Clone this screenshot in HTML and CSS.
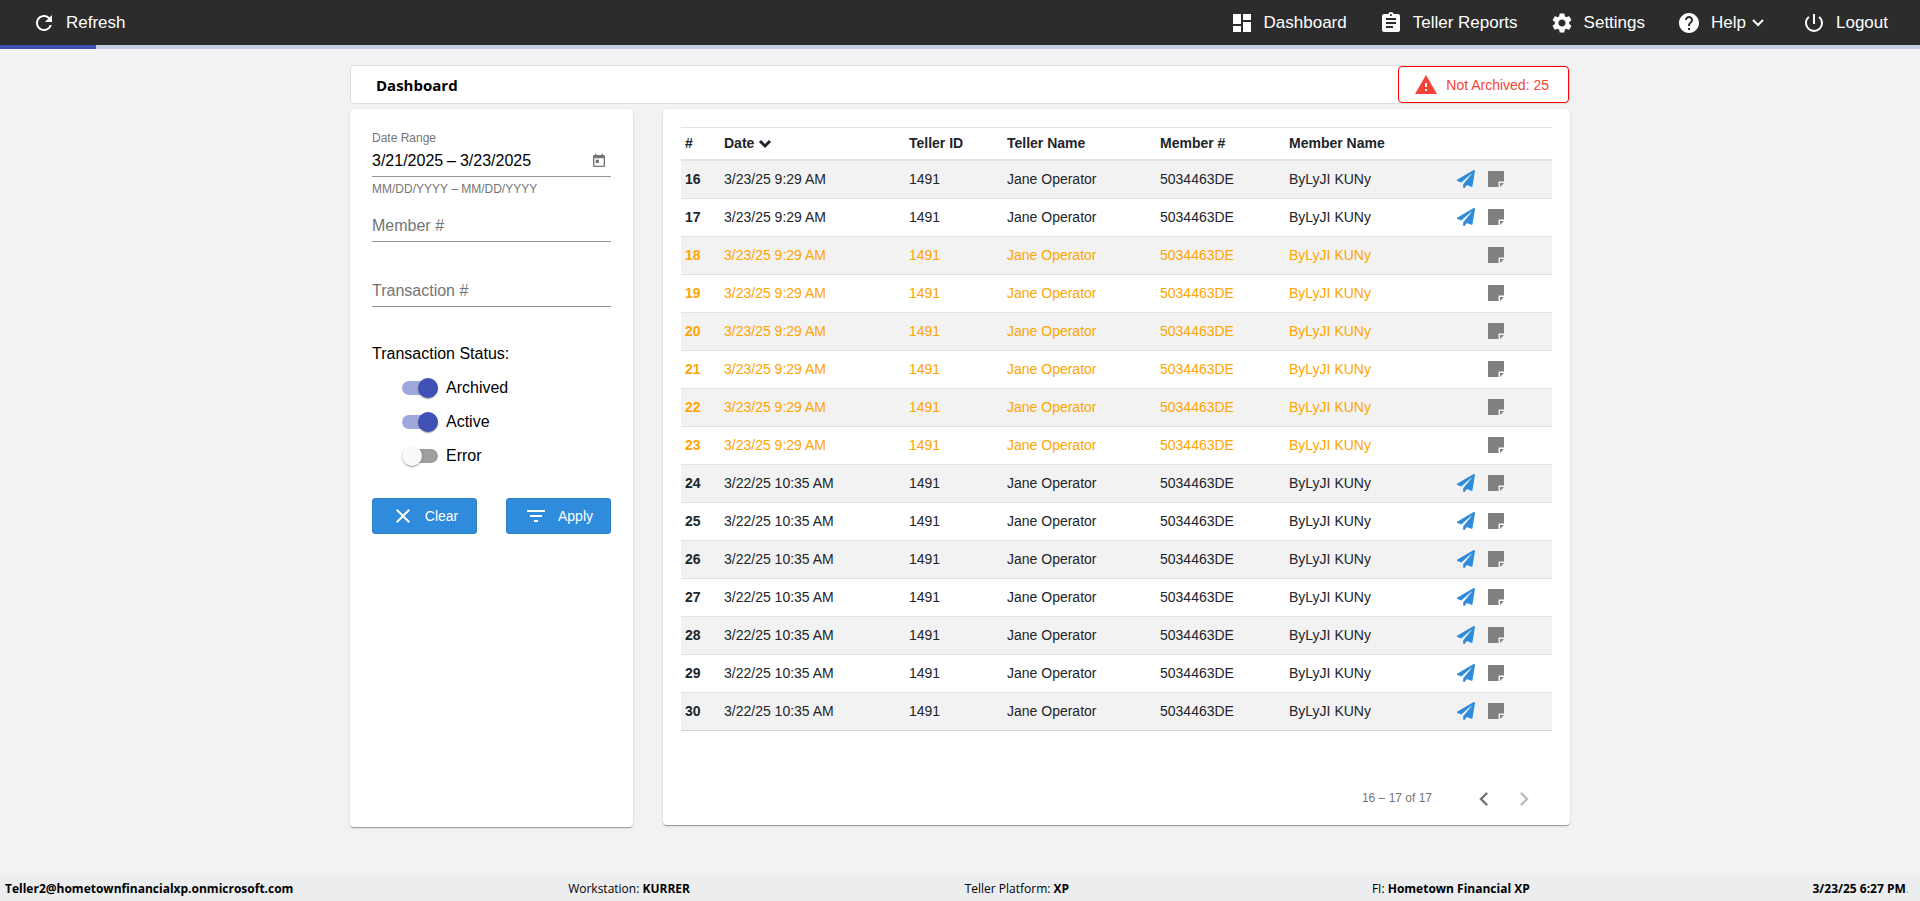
FILE: index.html
```html
<!DOCTYPE html>
<html lang="en">
<head>
<meta charset="utf-8">
<title>Dashboard</title>
<link rel="stylesheet" href="styles.css">
</head>
<body>
<svg class="defs" aria-hidden="true">
  <symbol id="plane" viewBox="0 0 512 512"><path d="M476 3.200L12.500 270.600c-18.100 10.400-15.800 35.600 2.200 43.200L121 358.400l287.300-253.200c5.500-4.900 13.300 2.600 8.600 8.300L176 407v80.500c0 23.600 28.500 32.900 42.500 15.800L282 426l124.600 52.200c14.200 6 30.400-2.900 33-18.200l72-432C515 7.800 493.300-6.800 476 3.200z"/></symbol>
  <symbol id="note" viewBox="0 0 16 16"><path d="M0 0h16v10.500h-5.500V16H0zM12 12h4l-4 4z"/></symbol>
</svg>
<header class="topbar">
  <button class="nav-item" type="button"><svg class="icon" viewBox="0 0 24 24"><path d="M17.650 6.350A7.958 7.958 0 0 0 12 4c-4.420 0-7.990 3.580-7.990 8s3.570 8 7.990 8c3.730 0 6.840-2.550 7.730-6h-2.080A5.990 5.990 0 0 1 12 18c-3.310 0-6-2.690-6-6s2.690-6 6-6c1.660 0 3.140.690 4.220 1.780L13 11h7V4l-2.350 2.350z"/></svg>Refresh</button>
  <nav class="nav">
    <a class="nav-item" href="#"><svg class="icon" viewBox="0 0 24 24"><path d="M3 13h8V3H3v10zm0 8h8v-6H3v6zm10 0h8V11h-8v10zm0-18v6h8V3h-8z"/></svg>Dashboard</a>
    <a class="nav-item" href="#"><svg class="icon" viewBox="0 0 24 24"><path d="M19 3h-4.180C14.400 1.840 13.300 1 12 1s-2.400.840-2.820 2H5c-1.100 0-2 .900-2 2v14c0 1.100.900 2 2 2h14c1.100 0 2-.900 2-2V5c0-1.100-.900-2-2-2zm-7 0c.550 0 1 .450 1 1s-.450 1-1 1-1-.450-1-1 .450-1 1-1zm2 14H7v-2h7v2zm3-4H7v-2h10v2zm0-4H7V7h10v2z"/></svg>Teller Reports</a>
    <a class="nav-item" href="#"><svg class="icon" viewBox="0 0 24 24"><path d="M19.140 12.940c.040-.300.060-.610.060-.940 0-.320-.020-.640-.070-.940l2.030-1.580c.180-.140.230-.410.120-.610l-1.920-3.320c-.120-.220-.370-.290-.590-.220l-2.390.960c-.500-.380-1.030-.700-1.620-.940l-.360-2.540c-.040-.240-.240-.410-.480-.410h-3.840c-.240 0-.430.170-.470.410l-.360 2.540c-.590.240-1.130.570-1.620.940l-2.390-.960c-.220-.080-.470 0-.590.220L2.740 8.870c-.120.210-.080.470.120.610l2.030 1.580c-.050.300-.090.630-.090.940s.020.640.070.940l-2.030 1.580c-.180.140-.230.410-.120.610l1.920 3.320c.120.220.370.290.590.220l2.390-.960c.500.380 1.030.700 1.620.940l.360 2.540c.050.240.240.410.480.410h3.840c.240 0 .440-.170.470-.410l.360-2.540c.590-.240 1.130-.560 1.620-.940l2.390.960c.220.080.470 0 .590-.220l1.920-3.320c.120-.220.070-.470-.120-.610l-2.010-1.580zM12 15.600c-1.980 0-3.600-1.620-3.600-3.600s1.620-3.600 3.600-3.600 3.600 1.620 3.600 3.600-1.620 3.600-3.600 3.600z"/></svg>Settings</a>
    <a class="nav-item" href="#"><svg class="icon" viewBox="0 0 24 24"><path d="M12 2C6.480 2 2 6.480 2 12s4.480 10 10 10 10-4.480 10-10S17.520 2 12 2zm1 17h-2v-2h2v2zm2.070-7.750l-.900.920C13.450 12.900 13 13.500 13 15h-2v-.500c0-1.100.450-2.100 1.170-2.830l1.240-1.260c.370-.360.590-.860.590-1.410 0-1.100-.900-2-2-2s-2 .900-2 2H8c0-2.210 1.790-4 4-4s4 1.790 4 4c0 .880-.360 1.680-.930 2.250z"/></svg>Help<svg class="caret" viewBox="0 0 14 14"><path d="M2 4l5 5 5-5"/></svg></a>
    <a class="nav-item" href="#"><svg class="icon" viewBox="0 0 24 24"><path d="M13 3h-2v10h2V3zm4.830 2.170l-1.420 1.420A6.920 6.920 0 0 1 19 12c0 3.870-3.130 7-7 7A6.995 6.995 0 0 1 7.580 6.580L6.170 5.170A8.932 8.932 0 0 0 3 12a9 9 0 0 0 18 0c0-2.740-1.230-5.180-3.170-6.830z"/></svg>Logout</a>
  </nav>
</header>
<div class="loading" role="progressbar" aria-label="Loading"><div class="loading-bar"></div></div>

<main class="page">
  <div class="titlebar">
    <h1 class="title">Dashboard</h1>
    <button class="alert" type="button"><svg class="alert-icon" viewBox="0 0 24 24"><path d="M1 21h22L12 2 1 21zm12-3h-2v-2h2v2zm0-4h-2v-4h2v4z"/></svg>Not Archived: 25</button>
  </div>
  <div class="columns">
    <form class="card filters">
      <div class="field field-date">
        <label class="field-label" for="from">Date Range</label>
        <div class="range">
          <input class="date" id="from" type="text" value="3/21/2025"><span>–</span><input class="date" type="text" value="3/23/2025" aria-label="End date">
          <button class="calendar" type="button" aria-label="Open calendar"><svg viewBox="0 0 24 24"><path d="M19 3h-1V1h-2v2H8V1H6v2H5c-1.110 0-1.990.900-1.990 2L3 19c0 1.100.890 2 2 2h14c1.100 0 2-.900 2-2V5c0-1.100-.900-2-2-2zm0 16H5V8h14v11zM7 10h5v5H7z"/></svg></button>
        </div>
      </div>
      <div class="hint">MM/DD/YYYY – MM/DD/YYYY</div>
      <input class="field field-text" type="text" placeholder="Member #" aria-label="Member #">
      <input class="field field-text" type="text" placeholder="Transaction #" aria-label="Transaction #">
      <fieldset class="status">
        <legend class="legend">Transaction Status:</legend>
        <label class="toggle"><input class="switch" type="checkbox" checked>Archived</label>
        <label class="toggle"><input class="switch" type="checkbox" checked>Active</label>
        <label class="toggle"><input class="switch" type="checkbox">Error</label>
      </fieldset>
      <div class="actions">
        <button class="btn" type="reset"><svg class="btn-icon" viewBox="0 0 24 24"><path d="M19 6.410L17.590 5 12 10.590 6.410 5 5 6.410 10.590 12 5 17.590 6.410 19 12 13.410 17.590 19 19 17.590 13.410 12z"/></svg>Clear</button>
        <button class="btn" type="button"><svg class="btn-icon" viewBox="0 0 24 24"><path d="M10 18h4v-2h-4v2zM3 6v2h18V6H3zm3 7h12v-2H6v2z"/></svg>Apply</button>
      </div>
    </form>

    <section class="card results">
      <table class="grid">
        <colgroup><col class="c-num"><col class="c-date"><col class="c-id"><col class="c-name"><col class="c-member"><col class="c-mname"><col class="c-icons"></colgroup>
        <thead><tr><th>#</th><th>Date <svg class="sort" viewBox="0 0 14 14"><path d="M2 4l5 5 5-5"/></svg></th><th>Teller ID</th><th>Teller Name</th><th>Member #</th><th>Member Name</th><th></th></tr></thead>
        <tbody>
          <tr><th>16</th><td>3/23/25 9:29 AM</td><td>1491</td><td>Jane Operator</td><td>5034463DE</td><td>ByLyJI KUNy</td><td><div class="row-icons"><svg class="plane"><use href="#plane"/></svg><svg class="note"><use href="#note"/></svg></div></td></tr>
          <tr><th>17</th><td>3/23/25 9:29 AM</td><td>1491</td><td>Jane Operator</td><td>5034463DE</td><td>ByLyJI KUNy</td><td><div class="row-icons"><svg class="plane"><use href="#plane"/></svg><svg class="note"><use href="#note"/></svg></div></td></tr>
          <tr class="pending"><th>18</th><td>3/23/25 9:29 AM</td><td>1491</td><td>Jane Operator</td><td>5034463DE</td><td>ByLyJI KUNy</td><td><div class="row-icons"><svg class="note"><use href="#note"/></svg></div></td></tr>
          <tr class="pending"><th>19</th><td>3/23/25 9:29 AM</td><td>1491</td><td>Jane Operator</td><td>5034463DE</td><td>ByLyJI KUNy</td><td><div class="row-icons"><svg class="note"><use href="#note"/></svg></div></td></tr>
          <tr class="pending"><th>20</th><td>3/23/25 9:29 AM</td><td>1491</td><td>Jane Operator</td><td>5034463DE</td><td>ByLyJI KUNy</td><td><div class="row-icons"><svg class="note"><use href="#note"/></svg></div></td></tr>
          <tr class="pending"><th>21</th><td>3/23/25 9:29 AM</td><td>1491</td><td>Jane Operator</td><td>5034463DE</td><td>ByLyJI KUNy</td><td><div class="row-icons"><svg class="note"><use href="#note"/></svg></div></td></tr>
          <tr class="pending"><th>22</th><td>3/23/25 9:29 AM</td><td>1491</td><td>Jane Operator</td><td>5034463DE</td><td>ByLyJI KUNy</td><td><div class="row-icons"><svg class="note"><use href="#note"/></svg></div></td></tr>
          <tr class="pending"><th>23</th><td>3/23/25 9:29 AM</td><td>1491</td><td>Jane Operator</td><td>5034463DE</td><td>ByLyJI KUNy</td><td><div class="row-icons"><svg class="note"><use href="#note"/></svg></div></td></tr>
          <tr><th>24</th><td>3/22/25 10:35 AM</td><td>1491</td><td>Jane Operator</td><td>5034463DE</td><td>ByLyJI KUNy</td><td><div class="row-icons"><svg class="plane"><use href="#plane"/></svg><svg class="note"><use href="#note"/></svg></div></td></tr>
          <tr><th>25</th><td>3/22/25 10:35 AM</td><td>1491</td><td>Jane Operator</td><td>5034463DE</td><td>ByLyJI KUNy</td><td><div class="row-icons"><svg class="plane"><use href="#plane"/></svg><svg class="note"><use href="#note"/></svg></div></td></tr>
          <tr><th>26</th><td>3/22/25 10:35 AM</td><td>1491</td><td>Jane Operator</td><td>5034463DE</td><td>ByLyJI KUNy</td><td><div class="row-icons"><svg class="plane"><use href="#plane"/></svg><svg class="note"><use href="#note"/></svg></div></td></tr>
          <tr><th>27</th><td>3/22/25 10:35 AM</td><td>1491</td><td>Jane Operator</td><td>5034463DE</td><td>ByLyJI KUNy</td><td><div class="row-icons"><svg class="plane"><use href="#plane"/></svg><svg class="note"><use href="#note"/></svg></div></td></tr>
          <tr><th>28</th><td>3/22/25 10:35 AM</td><td>1491</td><td>Jane Operator</td><td>5034463DE</td><td>ByLyJI KUNy</td><td><div class="row-icons"><svg class="plane"><use href="#plane"/></svg><svg class="note"><use href="#note"/></svg></div></td></tr>
          <tr><th>29</th><td>3/22/25 10:35 AM</td><td>1491</td><td>Jane Operator</td><td>5034463DE</td><td>ByLyJI KUNy</td><td><div class="row-icons"><svg class="plane"><use href="#plane"/></svg><svg class="note"><use href="#note"/></svg></div></td></tr>
          <tr><th>30</th><td>3/22/25 10:35 AM</td><td>1491</td><td>Jane Operator</td><td>5034463DE</td><td>ByLyJI KUNy</td><td><div class="row-icons"><svg class="plane"><use href="#plane"/></svg><svg class="note"><use href="#note"/></svg></div></td></tr>
        </tbody>
      </table>
      <div class="pager">
        <span class="pager-range">16 – 17 of 17</span>
        <button class="pager-btn" type="button" aria-label="Previous page"><svg viewBox="0 0 24 24"><path d="M15.410 7.410L14 6l-6 6 6 6 1.410-1.410L10.830 12z"/></svg></button>
        <button class="pager-btn" type="button" aria-label="Next page" disabled><svg viewBox="0 0 24 24"><path d="M10 6L8.590 7.410 13.170 12l-4.580 4.590L10 18l6-6z"/></svg></button>
      </div>
    </section>
  </div>
</main>

<footer class="footer">
  <b>Teller2@hometownfinancialxp.onmicrosoft.com</b>
  <span>Workstation: <b>KURRER</b></span>
  <span class="platform">Teller Platform: <b>XP</b></span>
  <span class="institution">FI: <b>Hometown Financial XP</b></span>
  <span><b>3/23/25 6:27 PM</b><span class="dot">.</span></span>
</footer>
</body>
</html>
```
FILE: styles.css
```css
* { box-sizing: border-box; }

body {
  margin: 0;
  min-height: 100vh;
  display: flex;
  flex-direction: column;
  background: #f2f2f2;
  color: #000;
  font-family: "Liberation Sans", Arial, sans-serif;
  font-size: 14px;
}

button, input { font: inherit; color: inherit; }
button { cursor: pointer; }
svg { display: block; fill: currentColor; flex: none; }
.defs { display: none; }

.topbar {
  display: flex;
  justify-content: space-between;
  align-items: center;
  height: 45px;
  padding: 0 32px;
  background: #2c2c2c;
  color: #fff;
  font-size: 17px;
}
.nav { display: flex; gap: 32px; }
.nav-item {
  display: flex;
  align-items: center;
  gap: 10px;
  padding: 0;
  border: 0;
  background: none;
  color: #fff;
  text-decoration: none;
}
.icon { width: 24px; height: 24px; }
.caret {
  width: 14px;
  height: 14px;
  margin: 0 5px 0 -5px;
  fill: none;
  stroke: currentColor;
  stroke-width: 2;
}

.loading { height: 4px; background: #c9cde7; }
.loading-bar { width: 5%; height: 100%; background: #3f51b5; }

.page {
  flex: 1;
  width: 100%;
  max-width: 1220px;
  margin: 0 auto;
  padding: 16px 0;
}
.titlebar {
  display: flex;
  justify-content: space-between;
  align-items: center;
  height: 39px;
  margin-bottom: 5px;
  padding-left: 25px;
  border: 1px solid #dedede;
  border-radius: 4px;
  background: #fff;
}
.title {
  margin: 0;
  font: bold 15px "Open Sans", "Noto Sans", sans-serif;
}
.alert {
  display: flex;
  align-items: center;
  gap: 8px;
  height: 37px;
  padding: 0 19px 0 15px;
  border: 1px solid #f00;
  border-radius: 4px;
  background: #fff;
  color: #f44336;
}
.alert-icon { width: 24px; height: 24px; }

.columns {
  display: grid;
  grid-template-columns: 283px 1fr;
  gap: 30px;
}
.card {
  border-radius: 4px;
  background: #fff;
  box-shadow: 0 2px 1px -1px rgba(0,0,0,.2), 0 1px 1px rgba(0,0,0,.14), 0 1px 3px rgba(0,0,0,.12);
}

.filters { padding: 21px 22px; }
.field {
  display: block;
  width: 100%;
  border: 0;
  border-bottom: 1px solid #949494;
  background: none;
}
.field-label { display: block; color: #757575; font-size: 12px; line-height: 16px; }
.range {
  display: flex;
  align-items: center;
  gap: 4px;
  height: 30px;
  font-size: 16px;
}
.date { width: 71px; padding: 0; border: 0; background: none; }
.calendar {
  margin-left: auto;
  padding: 0 4px;
  border: 0;
  background: none;
  color: #757575;
}
.calendar svg { width: 16px; height: 16px; }
.hint { margin-top: 4px; color: #757575; font-size: 12px; line-height: 16px; }
.field-text {
  height: 34px;
  margin: 11px 0 31px;
  padding: 2px 0 0;
  font-size: 16px;
}
.field-text::placeholder { color: #757575; opacity: 1; }

.status {
  display: flex;
  flex-direction: column;
  margin: 37px 0 0;
  padding: 0;
  border: 0;
  font-size: 16px;
}
.legend { padding: 0 0 7px; line-height: 20px; }
.toggle {
  display: flex;
  align-items: center;
  gap: 8px;
  height: 34px;
  padding-left: 30px;
}
.switch {
  appearance: none;
  display: flex;
  align-items: center;
  width: 36px;
  height: 14px;
  margin: 0;
  border-radius: 7px;
  background: #9e9e9e;
}
.switch::before {
  content: "";
  width: 20px;
  height: 20px;
  flex: none;
  border-radius: 50%;
  background: #fafafa;
  box-shadow: 0 2px 1px -1px rgba(0,0,0,.2), 0 1px 1px rgba(0,0,0,.14), 0 1px 3px rgba(0,0,0,.12);
}
.switch:checked { justify-content: flex-end; background: #9fa8da; }
.switch:checked::before { background: #3f51b5; }

.actions {
  display: grid;
  grid-template-columns: 1fr 1fr;
  gap: 29px;
  margin-top: 25px;
}
.btn {
  display: flex;
  align-items: center;
  justify-content: center;
  gap: 10px;
  height: 36px;
  padding: 0;
  border: 1px solid #2c80c5;
  border-radius: 3px;
  background: #2f8cdc;
  color: #fff;
}
.btn-icon { width: 24px; height: 24px; }

.results { margin-bottom: 2px; padding: 18px 18px 6px; }
.grid {
  width: 100%;
  table-layout: fixed;
  border-collapse: separate;
  border-spacing: 0;
  border-bottom: 1px solid #ced2d5;
  color: #212529;
}
.grid th, .grid td {
  height: 38px;
  padding: 0 4px 2px;
  border-top: 1px solid #dee2e6;
  text-align: left;
  white-space: nowrap;
}
.grid thead th { height: 34px; border-bottom: 2px solid #dee2e6; }
.grid tbody tr:first-child > * { height: 37px; border-top: 0; }
.grid tbody tr:nth-child(odd) { background: #f2f2f2; }
.grid .pending { color: #ffa500; }
.c-num { width: 39px; }
.c-date { width: 185px; }
.c-id { width: 98px; }
.c-name { width: 153px; }
.c-member { width: 129px; }
.c-icons { width: 101px; }
.sort {
  display: inline-block;
  width: 14px;
  height: 14px;
  vertical-align: -3px;
  fill: none;
  stroke: currentColor;
  stroke-width: 3;
}
.row-icons {
  display: flex;
  justify-content: flex-end;
  align-items: center;
  gap: 13px;
  padding-right: 44px;
}
.plane { width: 18px; height: 18px; color: #2f8cdc; }
.note { width: 16px; height: 16px; color: #808080; }

.pager {
  display: flex;
  justify-content: flex-end;
  align-items: center;
  margin-top: 48px;
  padding-right: 8px;
  color: #757575;
  font-size: 12px;
}
.pager-range { margin-right: 32px; padding-bottom: 3px; }
.pager-btn {
  display: grid;
  place-items: center;
  width: 40px;
  height: 40px;
  padding: 0;
  border: 0;
  background: none;
  color: #757575;
}
.pager-btn svg { width: 28px; height: 28px; }
.pager-btn:disabled { color: #bdbdbd; }

.footer {
  display: flex;
  justify-content: space-between;
  align-items: center;
  height: 26px;
  padding: 0 11px 0 5px;
  background: #ecedef;
  font: 12px "Open Sans", "Noto Sans", sans-serif;
}
.platform { padding-right: 28px; }
.institution { padding-right: 8px; }
.dot { color: #aaa; }
```
